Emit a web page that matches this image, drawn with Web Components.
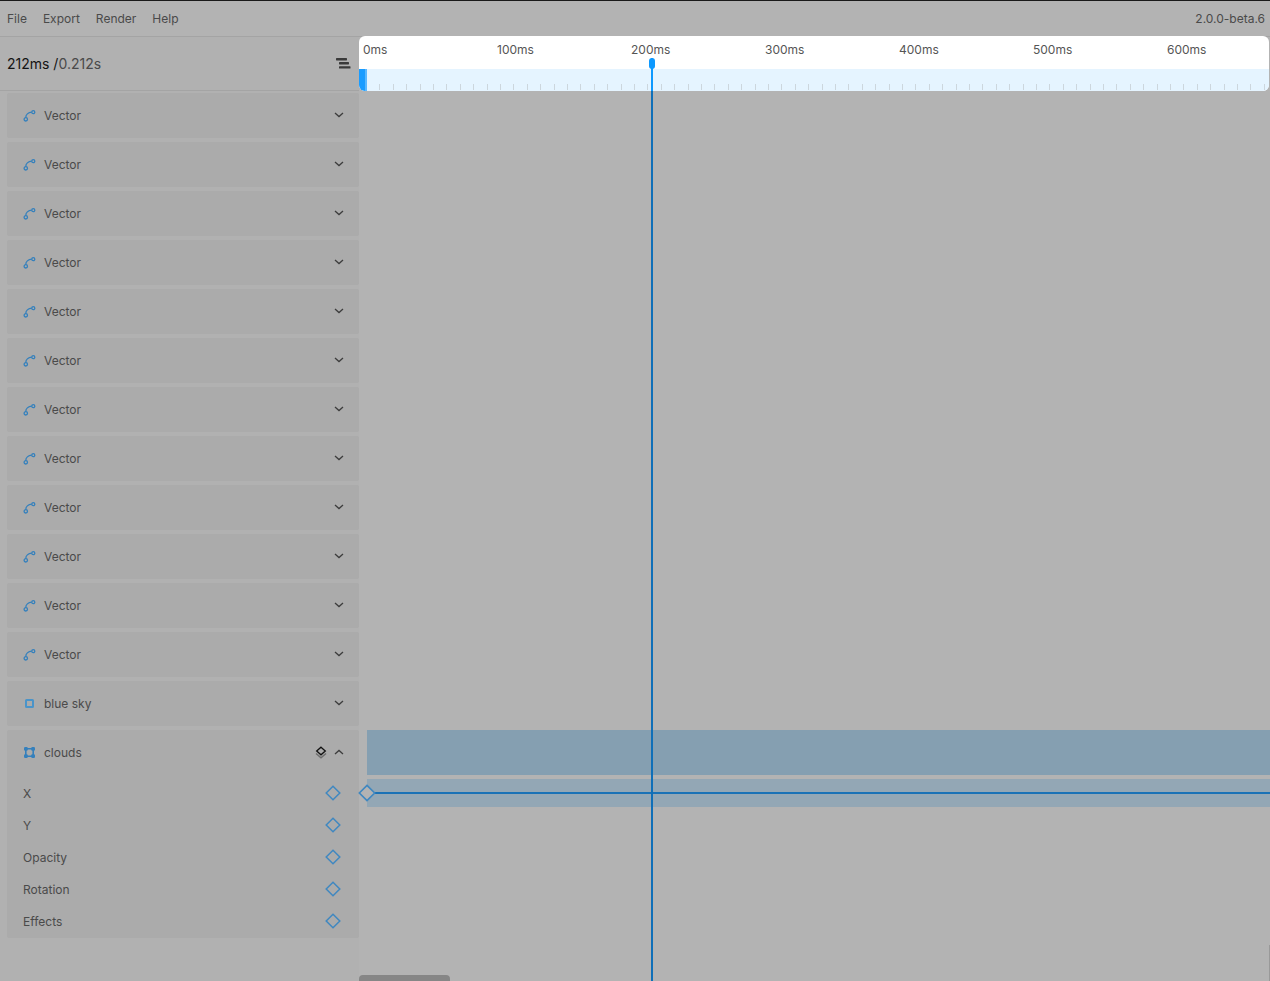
<!DOCTYPE html>
<html>
<head>
<meta charset="utf-8">
<title>Timeline</title>
<style>
  html, body { margin: 0; height: 100%; background: #b3b3b3; overflow: hidden; }
  body { font: 12px Inter, "Liberation Sans", sans-serif; color: #4a4a4a; }
</style>
</head>
<body>
<app-shell></app-shell>

<script>
const ICONS = {
  vector: `<svg width="14" height="14" viewBox="0 0 14 14" fill="none" stroke="#3580bc" stroke-width="1.300"><path d="M2.800 8.600C2.800 6 5 3.500 8.800 3.200"/><circle cx="2.800" cy="10.300" r="1.700"/><circle cx="10.300" cy="3.200" r="1.500"/></svg>`,
  rect: `<svg width="14" height="14" viewBox="0 0 14 14" fill="none" stroke="#4a94c9" stroke-width="2"><rect x="3" y="3" width="7" height="7" rx=".5"/></svg>`,
  group: `<svg width="14" height="14" viewBox="0 0 14 14" fill="#3580bc"><path d="M2.500 2h7v1.600h-7zM2.500 9.400h7V11h-7zM2 2.500h1.600v7H2zM9.400 2.500H11v7H9.400z"/><rect x="1" y="1" width="3.800" height="3.800" rx="1.200"/><rect x="8.200" y="1" width="3.800" height="3.800" rx="1.200"/><rect x="1" y="8.200" width="3.800" height="3.800" rx="1.200"/><rect x="8.200" y="8.200" width="3.800" height="3.800" rx="1.200"/></svg>`,
  down: `<svg width="10" height="6" viewBox="0 0 10 6" fill="none" stroke="#3d3d3d" stroke-width="1.300"><path d="M1 1l4 3.600L9 1"/></svg>`,
  up: `<svg width="10" height="6" viewBox="0 0 10 6" fill="none" stroke="#3d3d3d" stroke-width="1.300"><path d="M1 5l4-3.600L9 5"/></svg>`,
  layers: `<svg width="12" height="13" viewBox="0 0 12 13" fill="none"><path d="M1 7.500L6 11.800 11 7.500" stroke="#6e6e6e" stroke-width="1.500"/><path d="M6 1.200L10.300 5 6 8.800 1.700 5z" stroke="#111" stroke-width="1.300"/></svg>`,
  menu: `<svg width="15" height="12" viewBox="0 0 15 12" fill="#3a3a3a"><rect x="0" y="0" width="11" height="2.400" rx=".6"/><rect x="3" y="4" width="10" height="2.400" rx=".6"/><rect x="3" y="8.200" width="11.500" height="2.400" rx=".6"/></svg>`,
  diamond: `<svg width="16" height="16" viewBox="0 0 16 16" fill="none" stroke="#4088c0" stroke-width="1.500"><path d="M8 1.200L14.800 8 8 14.800 1.200 8z"/></svg>`
};

class MenuBar extends HTMLElement {
  constructor() {
    super();
    this.attachShadow({ mode: 'open' });
    this.shadowRoot.innerHTML = `
      <style>
        :host {
          display: flex;
          align-items: center;
          gap: 16px;
          height: 35px;
          padding: 0 5px 0 7px;
          border-top: 1px solid #1a1a1a;
          border-bottom: 1px solid #a4a4a4;
          color: #4a4a4a;
        }
        .version { margin-left: auto; }
      </style>
      <span>File</span><span>Export</span><span>Render</span><span>Help</span>
      <span class="version">2.0.0-beta.6</span>
    `;
  }
}

class TimeReadout extends HTMLElement {
  constructor() {
    super();
    this.attachShadow({ mode: 'open' });
    this.shadowRoot.innerHTML = `
      <style>
        :host {
          display: flex;
          align-items: center;
          height: 53px;
          padding: 0 8px 0 7px;
          border-bottom: 1px solid #a4a4a4;
          font-size: 14px;
          color: #4a4a4a;
        }
        b { font-weight: 400; color: #141414; white-space: pre; }
        svg { margin-left: auto; display: block; }
      </style>
      <b>212ms /</b><span>0.212s</span>${ICONS.menu}
    `;
  }
}

class LayerRow extends HTMLElement {
  constructor() {
    super();
    this.attachShadow({ mode: 'open' });
  }

  connectedCallback() {
    const icon = this.getAttribute('icon') || 'vector';
    const open = this.hasAttribute('open');
    this.shadowRoot.innerHTML = `
      <style>
        :host {
          display: block;
          background: #ababab;
          border-radius: 2px;
        }
        .head {
          display: flex;
          align-items: center;
          height: 45px;
          padding: 0 15px 0 16px;
        }
        .icon { display: flex; width: 14px; margin-right: 7px; }
        .layers { display: flex; margin-left: auto; margin-right: 7px; }
        .chev { display: flex; margin-bottom: 2px; }
        .spacer { margin-left: auto; }
        .props { padding-bottom: 1px; margin-top: 2px; }
      </style>
      <div class="head">
        <span class="icon">${ICONS[icon]}</span>
        <span><slot name="label"></slot></span>
        ${open ? `<span class="layers">${ICONS.layers}</span>` : '<span class="spacer"></span>'}
        <span class="chev">${open ? ICONS.up : ICONS.down}</span>
      </div>
      ${open ? '<div class="props"><slot></slot></div>' : ''}
    `;
  }
}

class PropRow extends HTMLElement {
  constructor() {
    super();
    this.attachShadow({ mode: 'open' });
    this.shadowRoot.innerHTML = `
      <style>
        :host {
          display: flex;
          align-items: center;
          justify-content: space-between;
          height: 32px;
          padding: 0 18px 0 16px;
        }
        svg { display: block; }
      </style>
      <span><slot></slot></span>${ICONS.diamond}
    `;
  }
}

class TimeRuler extends HTMLElement {
  constructor() {
    super();
    this.attachShadow({ mode: 'open' });
    const labels = [0, 100, 200, 300, 400, 500, 600]
      .map(ms => `<span>${ms}ms</span>`).join('');
    // one tick per 10ms, 134px per 100ms
    let ticks = '';
    for (let i = 1; i < 68; i++) {
      const x = Math.round(7 + i * 13.4) + 0.5;
      ticks += `<line x1="${x}" x2="${x}" y1="0" y2="6"/>`;
    }
    this.shadowRoot.innerHTML = `
      <style>
        :host {
          display: flex;
          flex-direction: column;
          height: 55px;
          margin: -1px 1px 0 0;
          background: #fff;
          border-radius: 6px;
          overflow: hidden;
        }
        .labels {
          display: flex;
          align-items: center;
          height: 27px;
          padding: 0 0 6px 4px;
          color: #555;
        }
        .labels span { flex: 0 0 134px; }
        .track {
          position: relative;
          flex: 1;
          background: #e5f4ff;
        }
        .handle {
          width: 6px;
          height: 100%;
          background: #1a9cff;
          border-right: 2px solid #5bb8ff;
        }
        svg {
          position: absolute;
          left: 0;
          bottom: 1px;
          stroke: #ccd6dd;
        }
      </style>
      <div class="labels">${labels}</div>
      <div class="track">
        <div class="handle"></div>
        <svg width="910" height="6">${ticks}</svg>
      </div>
    `;
  }
}

class TrackList extends HTMLElement {
  constructor() {
    super();
    this.attachShadow({ mode: 'open' });
    this.shadowRoot.innerHTML = `
      <style>
        :host {
          display: flex;
          flex-direction: column;
          gap: 4px;
          padding: 2px 0 0 8px;
        }
        .empty { height: 45px; }
        .bar { height: 45px; background: #859fb1; }
        .prop {
          position: relative;
          height: 28px;
          background: #93a7b5;
        }
        .line {
          position: absolute;
          left: 0;
          right: 0;
          top: 13px;
          height: 2px;
          background: #1a72b6;
        }
        .key {
          position: absolute;
          left: -9px;
          top: 5px;
          width: 18px;
          height: 18px;
        }
        .key svg { display: block; width: 18px; height: 18px; }
        .key path { fill: #b3b3b3; }
      </style>
      ${'<div class="empty"></div>'.repeat(13)}
      <div class="bar"></div>
      <div class="prop">
        <div class="line"></div>
        <div class="key">${ICONS.diamond}</div>
      </div>
    `;
  }
}

class PlayHead extends HTMLElement {
  constructor() {
    super();
    this.attachShadow({ mode: 'open' });
    this.shadowRoot.innerHTML = `
      <style>
        :host {
          position: absolute;
          left: 292px;
          top: 21px;
          bottom: 0;
          width: 2px;
          background: linear-gradient(#0d99ff 0 33px, #0f6fb8 33px);
        }
        .knob {
          position: absolute;
          left: -2px;
          top: 0;
          width: 6px;
          height: 11px;
          border-radius: 3px;
          background: #0d99ff;
        }
      </style>
      <div class="knob"></div>
    `;
  }
}

class AppShell extends HTMLElement {
  constructor() {
    super();
    this.attachShadow({ mode: 'open' });
    const rows = '<layer-row icon="vector"><span slot="label">Vector</span></layer-row>'.repeat(12);
    this.shadowRoot.innerHTML = `
      <style>
        :host {
          display: flex;
          flex-direction: column;
          height: 981px;
          overflow: hidden;
          opacity: 0.999;
        }
        .main {
          display: grid;
          grid-template-columns: 359px 1fr;
          flex: 1;
          min-height: 0;
        }
        .side { background: #b1b1b1; }
        .layers {
          display: flex;
          flex-direction: column;
          gap: 4px;
          padding: 2px 0 0 7px;
        }
        .time { position: relative; min-width: 0; }
        .scroll {
          position: absolute;
          left: 0;
          bottom: 0;
          width: 91px;
          height: 6px;
          background: #868686;
          border-radius: 4px 4px 0 0;
        }
        .vscroll {
          position: absolute;
          right: 0;
          bottom: 0;
          width: 1px;
          height: 36px;
          background: #999;
        }
      </style>
      <menu-bar></menu-bar>
      <div class="main">
        <div class="side">
          <time-readout></time-readout>
          <div class="layers">
            ${rows}
            <layer-row icon="rect"><span slot="label">blue sky</span></layer-row>
            <layer-row icon="group" open>
              <span slot="label">clouds</span>
              <prop-row>X</prop-row>
              <prop-row>Y</prop-row>
              <prop-row>Opacity</prop-row>
              <prop-row>Rotation</prop-row>
              <prop-row>Effects</prop-row>
            </layer-row>
          </div>
        </div>
        <div class="time">
          <time-ruler></time-ruler>
          <track-list></track-list>
          <play-head></play-head>
          <div class="scroll"></div>
          <div class="vscroll"></div>
        </div>
      </div>
    `;
  }
}

customElements.define('menu-bar', MenuBar);
customElements.define('time-readout', TimeReadout);
customElements.define('layer-row', LayerRow);
customElements.define('prop-row', PropRow);
customElements.define('time-ruler', TimeRuler);
customElements.define('track-list', TrackList);
customElements.define('play-head', PlayHead);
customElements.define('app-shell', AppShell);
</script>
</body>
</html>
